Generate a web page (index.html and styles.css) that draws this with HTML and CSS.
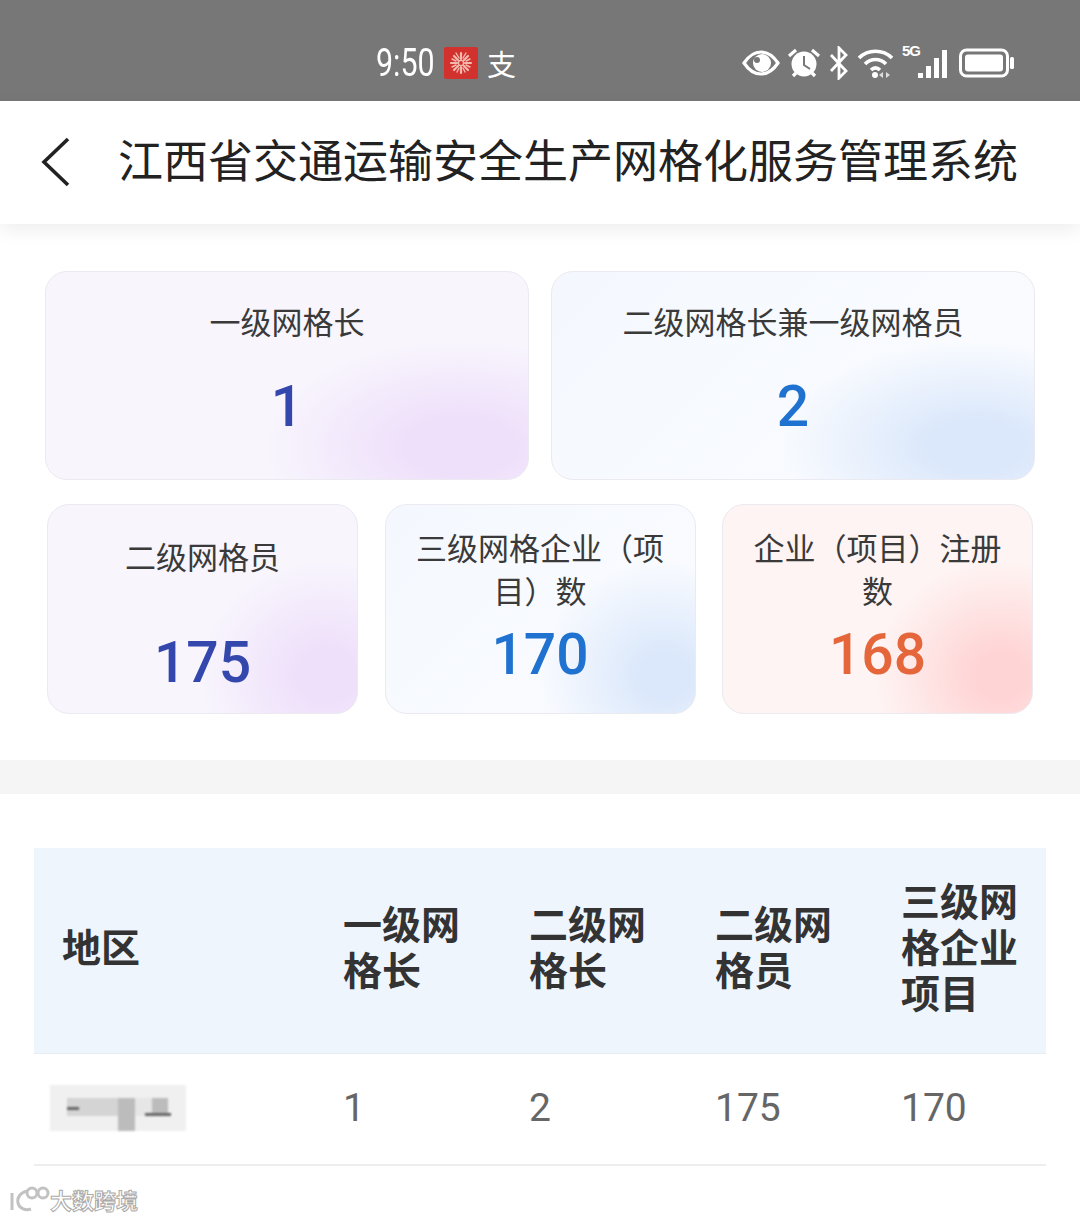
FILE: index.html
```html
<!DOCTYPE html>
<html lang="zh-CN">
<head>
    <meta charset="UTF-8">
    <meta name="viewport" content="width=device-width, initial-scale=1.0">
    <title>江西省交通运输安全生产网格化服务管理系统</title>
    <link rel="stylesheet" href="styles.css">
</head>
<body>
    <div class="status-bar">
        <div class="status-left">
            <span class="clock"><span class="clock-text">9:50</span></span>
            <svg class="flower" width="34" height="32" viewBox="0 0 34 32">
                <rect width="34" height="32" rx="2" fill="#d2322e"/>
                <g fill="none" stroke="#f4b9ae" stroke-width="2.2" stroke-linecap="round">
                    <path d="M17 12V6M17 20V26M13 16H7M21 16H27M14 13L10 9M20 13L24 9M14 19L10 23M20 19L24 23"/>
                    <path d="M15 11L12 6M19 11L22 6M12 14L8 12M22 14L26 12M12 18L8 20M22 18L26 20M15 21L13 25M19 21L21 25" stroke-width="1.4"/>
                    <circle cx="17" cy="16" r="2.6" stroke-width="1.4"/>
                </g>
            </svg>
            <span class="zhi">支</span>
        </div>
        <div class="status-right">
            <svg width="38" height="26" viewBox="0 0 38 26">
                <path d="M2 13C8 4 14 2 19 2s11 2 17 11c-6 9-12 11-17 11S8 22 2 13z" fill="none" stroke="#fff" stroke-width="3.2"/>
                <circle cx="20" cy="13" r="9" fill="#fff"/>
                <circle cx="15" cy="10" r="3" fill="#777"/>
            </svg>
            <svg width="34" height="32" viewBox="0 0 34 32">
                <circle cx="17" cy="17" r="12.5" fill="#fff"/>
                <path d="M17 9v9l6 4" fill="none" stroke="#777" stroke-width="2"/>
                <path d="M2 9L9 3M32 9L25 3M6 29l3-3M28 29l-3-3" stroke="#fff" stroke-width="3.2"/>
            </svg>
            <svg width="22" height="34" viewBox="0 0 22 34">
                <path d="M3 9l15 16-7 7V2l7 7L3 25" fill="none" stroke="#fff" stroke-width="2.8"/>
            </svg>
            <svg width="38" height="32" viewBox="0 0 38 32">
                <path d="M2 11c9-9 24-9 33 0M8 17c6-6 15-6 21 0M14 23c3-3 6-3 9 0" fill="none" stroke="#fff" stroke-width="3.6"/>
                <circle cx="18" cy="28" r="3" fill="#fff"/>
                <path d="M26 25l-4 3 4 3zM29 25l4 3-4 3z" fill="#ddd"/>
            </svg>
            <div class="signal">
                <span class="five-g">5G</span>
                <svg width="30" height="30" viewBox="0 0 30 30">
                    <path d="M0 24h5v5H0zM8 17h5v12H8zM16 9h5v20h-5zM24 1h5v28h-5z" fill="#fff"/>
                </svg>
            </div>
            <svg width="56" height="30" viewBox="0 0 56 30">
                <rect x="1.5" y="2" width="47" height="26" rx="6" fill="none" stroke="#fff" stroke-width="3"/>
                <rect x="6" y="6.5" width="38" height="17" rx="3" fill="#fff"/>
                <rect x="51" y="9" width="4" height="12" rx="1.5" fill="#fff"/>
            </svg>
        </div>
    </div>

    <header class="title-bar">
        <svg class="back" width="30" height="50" viewBox="0 0 30 50">
            <path d="M27 2L3 25l24 23" fill="none" stroke="#222" stroke-width="3.6"/>
        </svg>
        <h1>江西省交通运输安全生产网格化服务管理系统</h1>
    </header>

    <section class="stats">
        <div class="stats-top">
            <div class="stat-card purple">
                <div class="stat-label">一级网格长</div>
                <div class="stat-num">1</div>
            </div>
            <div class="stat-card blue">
                <div class="stat-label">二级网格长兼一级网格员</div>
                <div class="stat-num">2</div>
            </div>
        </div>
        <div class="stats-bottom">
            <div class="stat-card purple">
                <div class="stat-label single">二级网格员</div>
                <div class="stat-num">175</div>
            </div>
            <div class="stat-card blue">
                <div class="stat-label">三级网格企业（项目）数</div>
                <div class="stat-num">170</div>
            </div>
            <div class="stat-card red">
                <div class="stat-label">企业（项目）注册数</div>
                <div class="stat-num">168</div>
            </div>
        </div>
    </section>

    <div class="divider"></div>

    <section class="table-wrap">
        <table>
            <thead>
                <tr>
                    <th class="area">地区</th>
                    <th>一级网格长</th>
                    <th>二级网格长</th>
                    <th>二级网格员</th>
                    <th>三级网格企业项目</th>
                </tr>
            </thead>
            <tbody>
                <tr>
                    <td class="area"><div class="blurred"><i></i><i></i><i></i><i></i><b class="speck-a"></b><b class="speck-b"></b></div></td>
                    <td>1</td>
                    <td>2</td>
                    <td>175</td>
                    <td>170</td>
                </tr>
            </tbody>
        </table>
    </section>

    <div class="watermark">
        <svg width="42" height="28" viewBox="0 0 42 28">
            <g fill="none" stroke="#c2c2c2" stroke-width="3">
                <path d="M4 8v17"/>
                <path d="M20 6c-8 1-11 7-10 12s7 8 13 6"/>
                <circle cx="24" cy="8" r="5"/>
                <circle cx="35" cy="8" r="5"/>
            </g>
        </svg>
        <span>大数跨境</span>
    </div>
</body>
</html>
```

FILE: styles.css
```css
* {
    box-sizing: border-box;
}
body {
    margin: 0;
    height: 1220px;
    overflow: hidden;
    position: relative;
    background-color: #ffffff;
    font-family: "Noto Sans CJK SC", "Noto Sans", sans-serif;
    color: #333;
}

.status-bar {
    height: 101px;
    background-color: #777777;
    display: flex;
    justify-content: space-between;
    align-items: center;
    padding: 25px 65px 0 376px;
    color: #ffffff;
}
.status-left {
    display: flex;
    align-items: center;
}
.clock {
    width: 68px;
    font-family: Roboto, sans-serif;
    font-size: 38px;
    font-weight: 400;
    line-height: 32px;
}
.clock-text {
    display: inline-block;
    transform: scaleX(0.8);
    transform-origin: left center;
}
.flower {
    margin-right: 9px;
}
.zhi {
    font-size: 29px;
    line-height: 32px;
}
.status-right {
    display: flex;
    align-items: center;
    gap: 7px;
}
.signal {
    position: relative;
    width: 46px;
    height: 32px;
    margin-right: 4px;
    display: flex;
    justify-content: flex-end;
    align-items: flex-end;
}
.five-g {
    position: absolute;
    left: 0;
    top: -5px;
    font-family: "Liberation Sans", sans-serif;
    font-size: 15px;
    font-weight: 700;
    letter-spacing: -1px;
}

.title-bar {
    height: 123px;
    display: flex;
    align-items: center;
    padding: 0 0 1px 41px;
    background-color: #ffffff;
    box-shadow: 0 6px 18px rgba(0, 0, 0, 0.07);
    position: relative;
}
.back {
    margin-right: 47px;
}
.title-bar h1 {
    margin: 0 0 7px;
    font-size: 45px;
    font-weight: 400;
    color: #222;
    white-space: nowrap;
}

.stats {
    padding: 47px 45px 46px;
    display: flex;
    flex-direction: column;
    gap: 24px;
}
.stats-top {
    display: grid;
    grid-template-columns: 484px 484px;
    gap: 22px;
}
.stats-bottom {
    display: grid;
    grid-template-columns: repeat(3, 311px);
    gap: 26.5px;
    padding-left: 2px;
}
.stat-card {
    border: 1px solid #eaeaf0;
    border-radius: 22px;
    text-align: center;
    display: flex;
    flex-direction: column;
    justify-content: space-between;
}
.stats-top .stat-card {
    height: 209px;
    padding: 27px 30px 41px;
}
.stats-bottom .stat-card {
    height: 210px;
    padding: 20px 30px 27px;
}
.stat-card.purple {
    background:
        radial-gradient(ellipse 195px 105px at 86% 84%, #eedffa 25%, rgba(238, 223, 250, 0) 100%),
        #f8f5fd;
}
.stat-card.blue {
    background:
        radial-gradient(ellipse 195px 105px at 88% 84%, #dbe8fb 25%, rgba(219, 232, 251, 0) 100%),
        linear-gradient(135deg, #f4f8fe, #fbfcff);
}
.stat-card.red {
    background:
        radial-gradient(ellipse 125px 115px at 90% 82%, #ffd4d5 20%, rgba(255, 212, 213, 0) 100%),
        #fef4f3;
}
.stats-bottom .purple {
    background:
        radial-gradient(ellipse 125px 115px at 90% 82%, #eedffa 20%, rgba(238, 223, 250, 0) 100%),
        #f8f5fd;
}
.stats-bottom .blue {
    background:
        radial-gradient(ellipse 125px 115px at 90% 82%, #dbe8fb 20%, rgba(219, 232, 251, 0) 100%),
        linear-gradient(135deg, #f4f8fe, #fbfcff);
}
.stat-label {
    font-size: 31px;
    line-height: 43px;
    color: #3a3a3a;
}
.stat-label.single {
    margin-top: 9px;
}
.stat-num {
    font-family: Roboto, sans-serif;
    font-size: 57px;
    font-weight: 500;
    line-height: 62px;
}
.purple .stat-num {
    color: #3347ad;
}
.blue .stat-num {
    color: #1f72cf;
}
.red .stat-num {
    color: #e4663a;
}
.stats-bottom .purple .stat-num {
    margin-bottom: -8px;
}

.divider {
    height: 34px;
    background-color: #f5f5f5;
}

.table-wrap {
    padding: 54px 34px 0;
}
table {
    width: 1012px;
    border-collapse: collapse;
    table-layout: fixed;
}
th {
    height: 205px;
    padding: 0 40px 10px 0;
    background-color: #eef5fd;
    text-align: left;
    font-size: 39px;
    font-weight: 700;
    line-height: 46px;
    color: #333;
    border-bottom: 1px solid #e8edf3;
}
th:last-child {
    padding-right: 10px;
}
td {
    height: 112px;
    padding: 0 0 2px;
    font-family: Roboto, sans-serif;
    font-size: 39px;
    color: #666;
    border-bottom: 2px solid #eeeeee;
}
th.area {
    width: 309px;
    padding-left: 28px;
}
th:nth-child(2), th:nth-child(3), th:nth-child(4) {
    width: 186px;
}
td.area {
    padding-left: 16px;
}
.blurred {
    position: relative;
    width: 136px;
    height: 46px;
    background-color: #f0f0f0;
    filter: blur(1.2px);
    display: flex;
    align-items: flex-start;
    padding: 13px 0 0 17px;
}
.blurred i {
    display: block;
    height: 18px;
    background-color: #d4d4d4;
}
.blurred i:nth-child(1) {
    width: 51px;
}
.blurred i:nth-child(2) {
    width: 17px;
    height: 33px;
    background-color: #bcbcbc;
}
.blurred i:nth-child(3) {
    width: 17px;
    background-color: #e6e6e6;
}
.blurred i:nth-child(4) {
    width: 16px;
    background-color: #bcbcbc;
}
.speck-a, .speck-b {
    position: absolute;
    height: 3px;
    background-color: #666;
}
.speck-a {
    left: 17px;
    top: 22px;
    width: 12px;
}
.speck-b {
    left: 95px;
    top: 28px;
    width: 26px;
}

.watermark {
    position: absolute;
    left: 8px;
    bottom: 5px;
    display: flex;
    align-items: center;
    font-size: 22px;
    font-weight: 700;
    color: #ffffff;
    -webkit-text-stroke: 1px #aaaaaa;
}
```
